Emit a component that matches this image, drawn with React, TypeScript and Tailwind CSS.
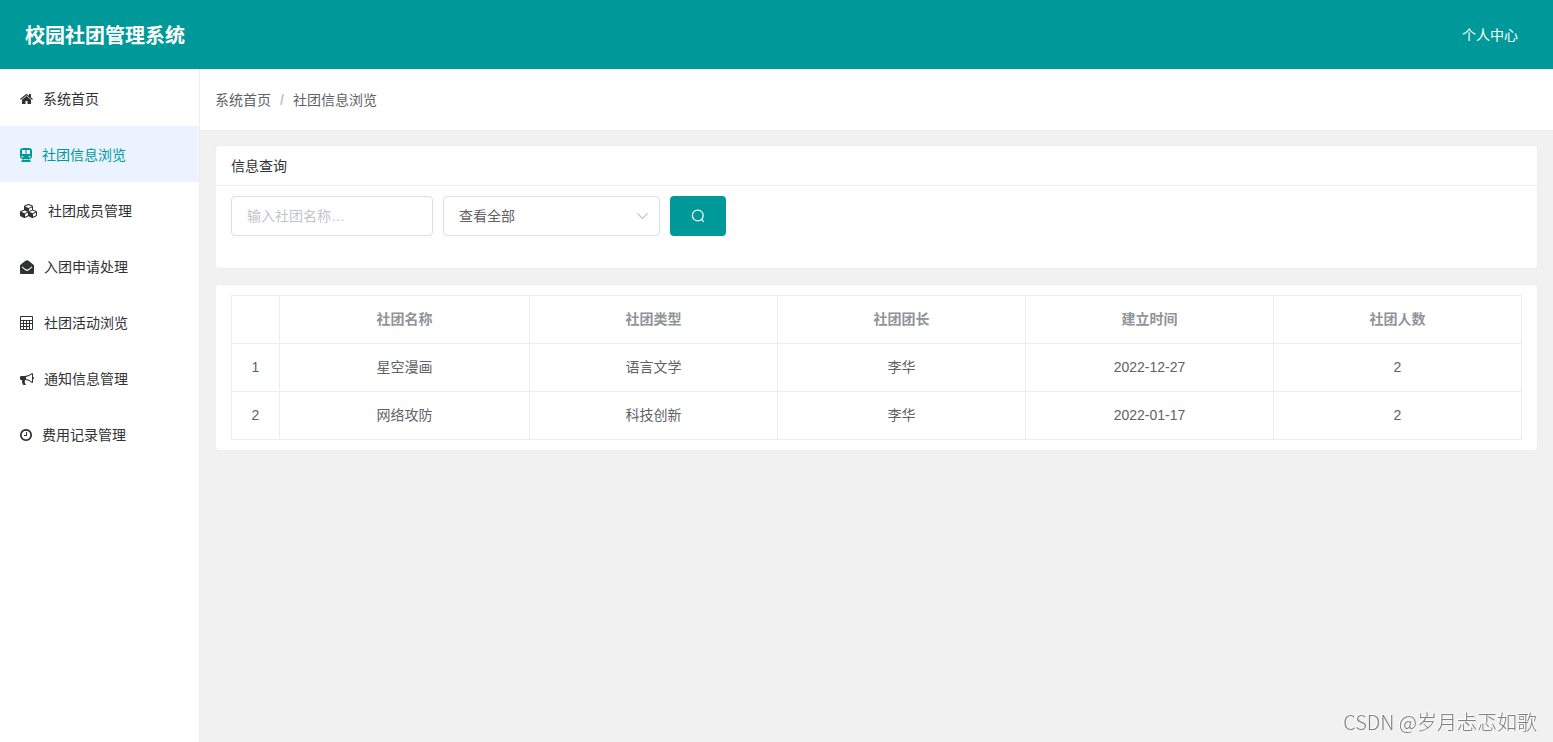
import React, { useState } from "react";

interface IconProps {
  width: number;
  viewBox: string;
  path: string;
}

interface MenuItem {
  label: string;
  icon: IconProps;
}

interface Club {
  id: number;
  name: string;
  type: string;
  leader: string;
  createTime: string;
  total: number;
}

const menuItems: MenuItem[] = [
  {
    label: "系统首页",
    icon: {
      width: 13,
      viewBox: "64 64 1664 1664",
      path: "M1472 992v480q0 26-19 45t-45 19h-384v-384h-256v384h-384q-26 0-45-19t-19-45v-480q0-1 .5-3t.5-3l575-474 575 474q1 2 1 6zm223-69l-62 74q-8 9-21 11h-3q-13 0-21-7l-692-577-692 577q-12 8-24 7-13-2-21-11l-62-74q-8-10-7-23.5t11-21.5l719-599q32-26 76-26t76 26l244 204v-195q0-14 9-23t23-9h192q14 0 23 9t9 23v408l219 182q10 8 11 21.5t-7 23.5z",
    },
  },
  {
    label: "社团信息浏览",
    icon: {
      width: 12,
      viewBox: "0 0 12 14",
      path: "M3.500 0h5Q12 0 12 2.500v6Q12 10.500 9 11l1.800 2.300Q11 14 10.400 14H1.600Q1 14 1.200 13.300L3 11Q0 10.500 0 8.500v-6Q0 0 3.500 0zM2 2v4h3.500V2zm4.500 0v4H10V2zM1.500 8v1.200h1.800V8zm7.200 0v1.200h1.800V8zM3.800 11.300l-.6.8h5.600l-.6-.8z",
    },
  },
  {
    label: "社团成员管理",
    icon: {
      width: 18,
      viewBox: "0 0 2304 1792",
      path: "M640 1632l384-192v-314l-384 164v342zm-64-454l404-173-404-173-404 173zm1088 454l384-192v-314l-384 164v342zm-64-454l404-173-404-173-404 173zm-448-293l384-165v-266l-384 164v267zm-64-379l441-189-441-189-441 189zm1088 518v416q0 36-19 67t-52 47l-448 224q-25 14-57 14t-57-14l-448-224q-4-2-7-4-2 2-7 4l-448 224q-25 14-57 14t-57-14l-448-224q-33-16-52-47t-19-67v-416q0-38 21.5-70t56.5-48l434-186v-400q0-38 21.5-70t56.5-48l448-192q23-10 50-10t50 10l448 192q35 16 56.5 48t21.5 70v400l434 186q36 16 57 48t21 70z",
    },
  },
  {
    label: "入团申请处理",
    icon: {
      width: 14,
      viewBox: "0 0 1792 1792",
      path: "M1792 710v922q0 66-47 113t-113 47H160q-66 0-113-47T0 1632V710q0-40 34-66Q300 420 700 110 800 20 896 20t196 90q400 310 666 534 34 26 34 66zM340 850q-20-26-46-8l-60 48q-26 18-8 44 120 130 460 390 120 96 210 96t210-96q340-260 460-390 18-26-8-44l-60-48q-26-18-46 8-140 140-420 320-90 60-136 60t-136-60Q480 990 340 850z",
    },
  },
  {
    label: "社团活动浏览",
    icon: {
      width: 14,
      viewBox: "0 0 14 14",
      path: "M1 0h11q1 0 1 1v12q0 1-1 1H1q-1 0-1-1V1q0-1 1-1zm0 1v3h11V1zm0 4v2h2V5zm3 0v2h2V5zm3 0v2h2V5zm3 0v2h2V5zM1 8v2h2V8zm3 0v2h2V8zm3 0v2h2V8zm3 0v5h2V8zm-9 3v2h2v-2zm3 0v2h2v-2zm3 0v2h2v-2z",
    },
  },
  {
    label: "通知信息管理",
    icon: {
      width: 14,
      viewBox: "0 0 1792 1792",
      path: "M1664 640q53 0 90.5 37.5t37.5 90.5-37.5 90.5-90.5 37.5v384q0 52-38 90t-90 38q-417-347-812-380-58 19-91 66t-31 100.5 40 92.5q-20 33-23 65.5t6 58 33.5 55 48 50 61.5 50.5q-29 58-111.5 83t-168.5 11.5-132-55.5q-7-23-29.5-87.5t-32-94.5-23-89-15-101 3.5-98.5 22-110.5h-122q-66 0-113-47t-47-113v-192q0-66 47-113t113-47h480q435 0 896-384 52 0 90 38t38 90v384zm-128 604v-954q-394 302-768 343v270q377 42 768 341z",
    },
  },
  {
    label: "费用记录管理",
    icon: {
      width: 12,
      viewBox: "128 128 1536 1536",
      path: "M1024 544v448q0 14-9 23t-23 9h-320q-14 0-23-9t-9-23v-64q0-14 9-23t23-9h224v-352q0-14 9-23t23-9h64q14 0 23 9t9 23zm416 352q0-148-73-273t-198-198-273-73-273 73-198 198-73 273 73 273 198 198 273 73 273-73 198-198 73-273zm224 0q0 209-103 385.5t-279.5 279.5-385.5 103-385.5-103-279.5-279.5-103-385.5 103-385.5 279.5-279.5 385.5-103 385.5 103 279.5 279.5 103 385.5z",
    },
  },
];

const columns = ["社团名称", "社团类型", "社团团长", "建立时间", "社团人数"];

const clubs: Club[] = [
  { id: 1, name: "星空漫画", type: "语言文学", leader: "李华", createTime: "2022-12-27", total: 2 },
  { id: 2, name: "网络攻防", type: "科技创新", leader: "李华", createTime: "2022-01-17", total: 2 },
];

const MenuIcon: React.FC<IconProps> = ({ width, viewBox, path }) => (
  <svg width={width} height={14} viewBox={viewBox} fill="currentColor" fillRule="evenodd" aria-hidden="true">
    <path d={path} />
  </svg>
);

const App: React.FC = () => {
  const [active, setActive] = useState("社团信息浏览");
  const [keyword, setKeyword] = useState("");
  const [type, setType] = useState("");

  const cellClass = "h-12 border border-[#ebeef5] px-2.5 pb-0.5";

  return (
    <div className="flex min-h-screen flex-col bg-[#f1f1f1] font-['Liberation_Sans','Noto_Sans_CJK_SC',sans-serif] text-sm text-[#606266]">
      <header className="flex h-[69px] items-center justify-between bg-[#009999] pr-[35px] pl-[25px] text-white">
        <h1 className="pt-0.5 text-xl font-bold">校园社团管理系统</h1>
        <a href="#profile">个人中心</a>
      </header>

      <div className="flex grow">
        {/* Sidebar */}
        <nav className="w-[200px] shrink-0 border-r border-[#eeeeee] bg-white pt-px">
          {menuItems.map((item) => (
            <a
              key={item.label}
              href="#menu"
              onClick={() => setActive(item.label)}
              className={`flex h-14 items-center gap-2.5 px-5 pt-0.5 ${
                active === item.label ? "bg-[#eaf3ff] text-[#009999]" : "text-[#303133]"
              }`}
            >
              <MenuIcon {...item.icon} />
              <span>{item.label}</span>
            </a>
          ))}
        </nav>

        <div className="flex min-w-0 grow flex-col">
          {/* Breadcrumb */}
          <div className="flex h-[61px] items-center bg-white px-[15px]">
            <a href="#home">系统首页</a>
            <span className="mx-[9px] font-bold text-[#c0c4cc]">/</span>
            <span>社团信息浏览</span>
          </div>

          <main className="flex grow flex-col gap-[15px] p-[15px]">
            {/* Search */}
            <section className="rounded border border-[#ebeef5] bg-white">
              <h2 className="flex h-10 items-center border-b border-[#ebeef5] px-[15px] text-[#303133]">
                信息查询
              </h2>
              <form
                className="flex gap-2.5 px-[15px] pt-2.5 pb-8"
                onSubmit={(e) => e.preventDefault()}
              >
                <input
                  type="text"
                  aria-label="社团名称"
                  value={keyword}
                  onChange={(e) => setKeyword(e.target.value)}
                  placeholder="输入社团名称…"
                  className="h-10 w-[202px] rounded border border-[#dcdfe6] px-[15px] placeholder:text-[#c0c4cc] focus:outline-none"
                />
                <div className="relative">
                  <select
                    aria-label="社团类型"
                    value={type}
                    onChange={(e) => setType(e.target.value)}
                    className="h-10 w-[217px] appearance-none rounded border border-[#dcdfe6] bg-white px-[15px] focus:outline-none"
                  >
                    <option value="">查看全部</option>
                    <option value="语言文学">语言文学</option>
                    <option value="科技创新">科技创新</option>
                  </select>
                  <svg
                    className="pointer-events-none absolute top-[13px] right-2.5"
                    width="14"
                    height="14"
                    viewBox="0 0 14 14"
                    fill="none"
                    stroke="#c0c4cc"
                    strokeWidth="1.2"
                    aria-hidden="true"
                  >
                    <path d="M1.5 4.5 6.5 9.5 11.5 4.5" />
                  </svg>
                </div>
                <button
                  type="submit"
                  aria-label="查询"
                  className="flex h-10 w-14 items-center justify-center rounded bg-[#009999] text-white"
                >
                  <svg
                    width="14"
                    height="14"
                    viewBox="0 0 14 14"
                    fill="none"
                    stroke="currentColor"
                    strokeWidth="1.2"
                    aria-hidden="true"
                  >
                    <circle cx="6.8" cy="6.5" r="5.4" />
                    <path d="M10.6 10.5 12.8 12.8" />
                  </svg>
                </button>
              </form>
            </section>

            {/* Club list */}
            <section className="rounded border border-[#ebeef5] bg-white px-[15px] py-2.5">
              <table className="w-full table-fixed border-collapse text-center">
                <colgroup>
                  <col className="w-12" />
                  <col className="w-[250px]" />
                </colgroup>
                <thead className="text-[#909399]">
                  <tr>
                    <th className={cellClass} aria-label="序号" />
                    {columns.map((column) => (
                      <th key={column} className={`${cellClass} font-bold`}>
                        {column}
                      </th>
                    ))}
                  </tr>
                </thead>
                <tbody>
                  {clubs.map((club) => (
                    <tr key={club.id}>
                      <td className={cellClass}>{club.id}</td>
                      <td className={cellClass}>{club.name}</td>
                      <td className={cellClass}>{club.type}</td>
                      <td className={cellClass}>{club.leader}</td>
                      <td className={cellClass}>{club.createTime}</td>
                      <td className={cellClass}>{club.total}</td>
                    </tr>
                  ))}
                </tbody>
              </table>
            </section>
          </main>
        </div>
      </div>

      <div className="pointer-events-none fixed right-4 bottom-1.5 font-['Noto_Sans_CJK_SC',sans-serif] text-xl leading-7 font-light text-[#808080] [text-shadow:-1px_-1px_0_#ffffff]">
        CSDN @岁月忐忑如歌
      </div>
    </div>
  );
};

export default App;
